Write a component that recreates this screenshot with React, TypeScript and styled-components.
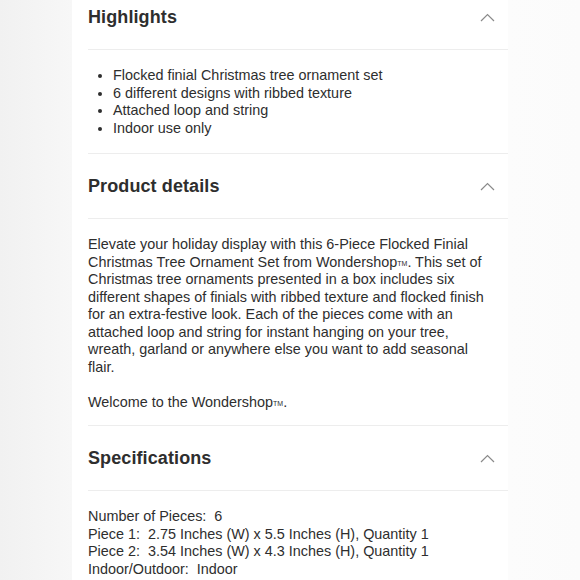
import React from 'react';
import styled, { createGlobalStyle } from 'styled-components';

const GlobalStyle = createGlobalStyle`
  html, body {
    margin: 0;
    padding: 0;
    height: 100%;
    overflow: hidden;
    background: linear-gradient(to right, #f1f1f1 0px, #f7f7f7 72px, #fcfcfc 508px, #fbfbfb 580px);
    font-family: 'Liberation Sans', Arial, Helvetica, sans-serif;
    color: #333;
  }
`;

const Page = styled.div`
  display: flex;
  justify-content: flex-start;
  padding-left: 72px;
`;

const Card = styled.div`
  width: 436px;
  background: #fff;
  padding-left: 16px;
  box-sizing: border-box;
  margin-top: -15px;
`;

const Section = styled.section`
  border-bottom: 1px solid #ededed;
`;

const Header = styled.div`
  display: flex;
  align-items: center;
  justify-content: space-between;
  height: 64px;
  padding-right: 13px;
  border-bottom: 1px solid #ededed;
`;

const Title = styled.h2`
  margin: 0;
  font-size: 18px;
  font-weight: 700;
  color: #2e2e2e;
  letter-spacing: 0.1px;
`;

const Body = styled.div<{ $pb?: number }>`
  padding: 17px 16px ${p => p.$pb ?? 16}px 0;
  font-size: 14.4px;
  line-height: 17.5px;
  color: #2e2e2e;
`;

const List = styled.ul`
  margin: 0;
  padding-left: 25px;
  list-style: disc;
`;

const Para = styled.p`
  margin: 0;
  & + & {
    margin-top: 17.5px;
  }
`;

const SpecLine = styled.div`
  white-space: nowrap;
`;

const Tm = styled.span`
  font-size: 7px;
  line-height: 0;
  vertical-align: 1px;
`;

const Chevron = () => (
  <svg width="15" height="9" viewBox="0 0 15 9" fill="none">
    <polyline points="1,8 7.5,1.5 14,8" stroke="#8a8a8a" strokeWidth="1.2" />
  </svg>
);

const AccordionSection: React.FC<{ title: string; children: React.ReactNode; pb?: number }> = ({ title, children, pb }) => (
  <Section>
    <Header>
      <Title>{title}</Title>
      <Chevron />
    </Header>
    <Body $pb={pb}>{children}</Body>
  </Section>
);

const App: React.FC = () => (
  <>
    <GlobalStyle />
    <Page>
      <Card>
        <AccordionSection title="Highlights">
          <List>
            <li>Flocked finial Christmas tree ornament set</li>
            <li>6 different designs with ribbed texture</li>
            <li>Attached loop and string</li>
            <li>Indoor use only</li>
          </List>
        </AccordionSection>
        <AccordionSection title="Product details" pb={14}>
          <Para>
            Elevate your holiday display with this 6-Piece Flocked Finial Christmas Tree Ornament Set from
            Wondershop<Tm>TM</Tm>. This set of Christmas tree ornaments presented in a box includes six different
            shapes of finials with ribbed texture and flocked finish for an extra-festive look. Each of the pieces
            come with an attached loop and string for instant hanging on your tree, wreath, garland or anywhere
            else you want to add seasonal flair.
          </Para>
          <Para>
            Welcome to the Wondershop<Tm>TM</Tm>.
          </Para>
        </AccordionSection>
        <AccordionSection title="Specifications">
          <SpecLine>Number of Pieces:&nbsp; 6</SpecLine>
          <SpecLine>Piece 1:&nbsp; 2.75 Inches (W) x 5.5 Inches (H), Quantity 1</SpecLine>
          <SpecLine>Piece 2:&nbsp; 3.54 Inches (W) x 4.3 Inches (H), Quantity 1</SpecLine>
          <SpecLine>Indoor/Outdoor:&nbsp; Indoor</SpecLine>
          <SpecLine>Material:&nbsp; Polyester</SpecLine>
        </AccordionSection>
      </Card>
    </Page>
  </>
);

export default App;
